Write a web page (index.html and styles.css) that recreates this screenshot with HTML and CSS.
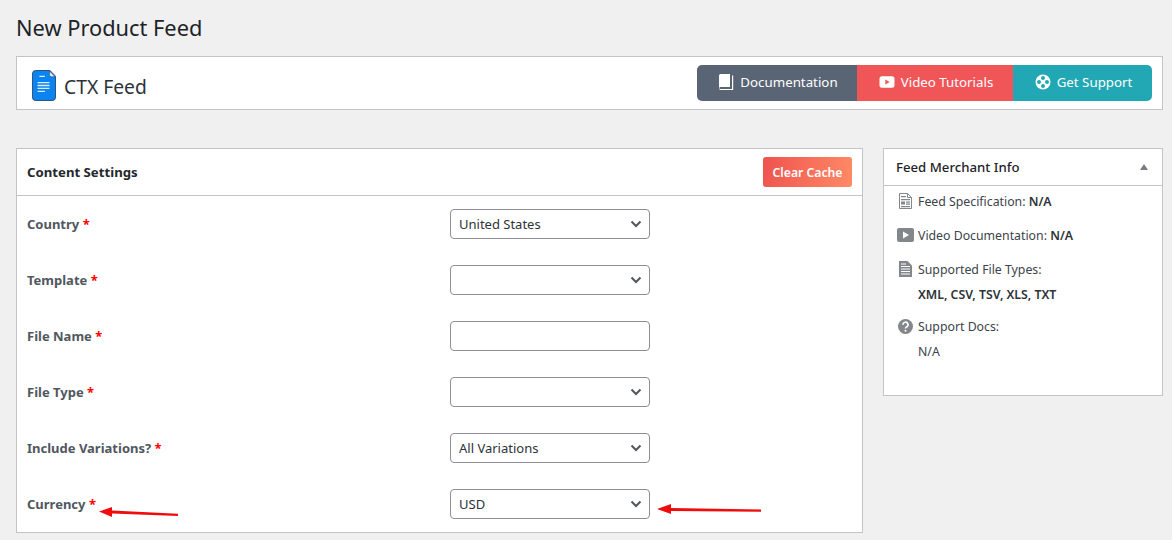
FILE: index.html
```html
<!DOCTYPE html>
<html lang="en">
<head>
<meta charset="utf-8">
<title>New Product Feed</title>
<link rel="stylesheet" href="styles.css">
</head>
<body>
<div class="wrap">
  <h1 class="page-title">New Product Feed</h1>
  <header class="brand-bar">
    <div class="brand">
      <svg class="brand-icon" width="24" height="31" viewBox="0 0 26 32" preserveAspectRatio="none"><path d="M4 .5h15.500l6 6V28a3.500 3.500 0 0 1-3.500 3.500H4A3.500 3.500 0 0 1 .5 28V4A3.500 3.500 0 0 1 4 .5z" fill="#0a84f0" stroke="#2c4a6e"/><path d="M19 1l6 6h-4a2 2 0 0 1-2-2z" fill="#e8eef4" stroke="#2c4a6e" stroke-width=".6"/><path d="M8 6.500h6M6 13h13M6 16h13M6 19h13M6 22h8" stroke="#dcecff" stroke-width="1.300" fill="none"/></svg>
      <span class="brand-name">CTX Feed</span>
    </div>
    <nav class="btn-group">
      <a class="link-btn doc"><svg width="16" height="17" viewBox="0 0 16 17"><path d="M1 1.500A1.500 1.500 0 0 1 2.500 0H12v13H2.500A1.500 1.500 0 0 0 1 14.500z" fill="#fff"/><path d="M14 1.500h1.200V16H3a2 2 0 0 1-2-1.500A1.600 1.600 0 0 1 2.500 15H14z" fill="#fff"/></svg>Documentation</a>
      <a class="link-btn video"><svg width="16" height="12" viewBox="0 0 16 12"><rect width="15" height="11.500" y=".25" x=".5" rx="2.500" fill="#fff"/><path d="M6.300 3.400v5.200l4.400-2.600z" fill="#f05558"/></svg>Video Tutorials</a>
      <a class="link-btn support"><svg width="16" height="16" viewBox="0 0 16 16"><circle cx="8" cy="8" r="7.500" fill="#fff"/><circle cx="8" cy="4" r="2" fill="#22a7b5"/><circle cx="8" cy="12" r="2" fill="#22a7b5"/><circle cx="4" cy="8" r="2" fill="#22a7b5"/><circle cx="12" cy="8" r="2" fill="#22a7b5"/></svg>Get Support</a>
    </nav>
  </header>
  <div class="columns">
    <main class="card settings">
      <div class="card-head">
        <h2 class="card-title">Content Settings</h2>
        <button class="clear-btn" type="button">Clear Cache</button>
      </div>
      <div class="form-row">
        <label class="form-label">Country <span class="req">*</span></label>
        <select class="field"><option>United States</option></select>
      </div>
      <div class="form-row">
        <label class="form-label">Template <span class="req">*</span></label>
        <select class="field"><option></option></select>
      </div>
      <div class="form-row">
        <label class="form-label">File Name <span class="req">*</span></label>
        <input class="field" type="text">
      </div>
      <div class="form-row">
        <label class="form-label">File Type <span class="req">*</span></label>
        <select class="field"><option></option></select>
      </div>
      <div class="form-row">
        <label class="form-label">Include Variations? <span class="req">*</span></label>
        <select class="field"><option>All Variations</option></select>
      </div>
      <div class="form-row">
        <label class="form-label">Currency <span class="req">*</span></label>
        <select class="field"><option>USD</option></select>
      </div>
    </main>
    <aside class="card info">
      <div class="info-head">
        <h2 class="info-title">Feed Merchant Info</h2>
        <span class="caret"></span>
      </div>
      <ul class="info-list">
        <li class="info-item">
          <span class="info-icon"><svg width="13" height="16" viewBox="0 0 13 16"><path d="M.5.500h8l4 4v11H.5z" fill="#fff" stroke="#82878c"/><path d="M8.500.500v4h4" fill="none" stroke="#82878c"/><path d="M2 3h5v1.200H2zM2 6h9v1.200H2zM2 8.500h4v3H2zM7 8.500h4v1.200H7zM7 10.500h4v1.200H7zM2 13h9v1.200H2z" fill="#82878c"/></svg></span>
          <span>Feed Specification: <b class="strong">N/A</b></span>
        </li>
        <li class="info-item">
          <span class="info-icon"><svg width="17" height="14" viewBox="0 0 17 14"><rect width="17" height="14" rx="2" fill="#82878c"/><path d="M6 3.500v7l6-3.500z" fill="#fff"/></svg></span>
          <span>Video Documentation: <b class="strong">N/A</b></span>
        </li>
        <li class="info-item">
          <span class="info-icon"><svg width="13" height="16" viewBox="0 0 13 16"><path d="M0 0h8.500L13 4.500V16H0z" fill="#82878c"/><path d="M2 3h5M2 5.500h9M2 8h9M2 10.500h9M2 13h9" stroke="#fff" stroke-width="1"/></svg></span>
          <span>Supported File Types:</span>
        </li>
        <li class="info-detail strong">XML, CSV, TSV, XLS, TXT</li>
        <li class="info-item">
          <span class="info-icon"><svg width="15" height="15" viewBox="0 0 15 15"><circle cx="7.500" cy="7.500" r="7.500" fill="#82878c"/><path d="M5 5.800a2.500 2.500 0 1 1 3.700 2.100c-.8.500-1.200.8-1.200 1.600" fill="none" stroke="#fff" stroke-width="1.700"/><circle cx="7.500" cy="11.700" r="1" fill="#fff"/></svg></span>
          <span>Support Docs:</span>
        </li>
        <li class="info-detail">N/A</li>
      </ul>
    </aside>
  </div>
</div>
<svg class="annotation arrow-label" width="82" height="12" viewBox="0 0 82 12"><path d="M0 5.500L13 1v3.500l66 3.200v2.300L13 7.500V11z" fill="#f00c0c"/></svg>
<svg class="annotation arrow-field" width="106" height="12" viewBox="0 0 106 12"><path d="M0 6L14 1v4l90 1.500v2.300L14 8v3z" fill="#f00c0c"/></svg>
</body>
</html>
```
FILE: styles.css
```css
* { box-sizing: border-box; }
html, body { margin: 0; height: 540px; overflow: hidden; }
body {
  background: #f0f0f1;
  color: #3c434a;
  font-family: "Noto Sans", "Open Sans", sans-serif;
  font-size: 13px;
  position: relative;
}
.wrap { padding: 0 9px 0 16px; }
.page-title {
  margin: 0;
  height: 56px;
  padding-top: 13px;
  font-size: 21.800px;
  line-height: 30px;
  font-weight: 400;
  color: #1d2327;
}
.brand-bar {
  height: 54px;
  background: #fff;
  border: 1px solid #c3c4c7;
  padding: 8px 10px 8px 15px;
  display: flex;
  justify-content: space-between;
  align-items: center;
}
.brand { display: flex; align-items: center; gap: 8px; margin-top: 4px; }
.brand-icon { display: block; }
.brand-name { font-size: 19.300px; color: #2c3338; line-height: 26px; padding-top: 4px; }
.btn-group { display: flex; height: 36px; border-radius: 5px; overflow: hidden; }
.link-btn {
  display: flex;
  align-items: center;
  justify-content: center;
  gap: 6px;
  color: #fff;
  font-size: 13.300px;
  padding: 0 0 2px 2px;
}
.link-btn.doc { width: 160px; background: #596575; }
.link-btn.video { width: 156px; background: #f05558; }
.link-btn.support { width: 139px; background: #22a7b5; }
.columns { display: flex; align-items: flex-start; gap: 20px; margin-top: 38px; }
.card { background: #fff; border: 1px solid #c3c4c7; }
.settings { width: 847px; height: 385px; }
.card-head {
  height: 47px;
  border-bottom: 1px solid #c3c4c7;
  padding: 0 10px;
  display: flex;
  align-items: center;
  justify-content: space-between;
}
.card-title { margin: 0; font-size: 13.200px; font-weight: 700; color: #23282d; }
.clear-btn {
  width: 89px;
  height: 30px;
  border: 0;
  border-radius: 3px;
  background: linear-gradient(100deg, #ef5350, #ff8a65);
  color: #fff;
  font: 600 12.200px "Noto Sans", "Open Sans", sans-serif;
  padding: 0;
}
.form-row { height: 56px; padding: 13px 10px; display: flex; align-items: center; }
.form-label { width: 423px; font-size: 13px; font-weight: 700; color: #50575e; }
.req { color: #f00; }
.field {
  width: 200px;
  height: 30px;
  border: 1px solid #8c8f94;
  border-radius: 4px;
  background-color: #fff;
  color: #2c3338;
  font: 13px "Noto Sans", "Open Sans", sans-serif;
  padding: 0 8px;
  margin: 0;
}
select.field {
  appearance: none;
  background-image: url("data:image/svg+xml,%3Csvg xmlns='http://www.w3.org/2000/svg' width='12' height='8' viewBox='0 0 12 8'%3E%3Cpath d='M1.500 1.500L6 6l4.500-4.500' fill='none' stroke='%2350575e' stroke-width='2'/%3E%3C/svg%3E");
  background-repeat: no-repeat;
  background-position: right 7px center;
}
.info { width: 280px; height: 248px; }
.info-head {
  height: 37px;
  border-bottom: 1px solid #c3c4c7;
  padding: 0 14px 0 12px;
  display: flex;
  align-items: center;
  justify-content: space-between;
}
.info-title { margin: 0; font-size: 13.200px; font-weight: 500; color: #1d2327; }
.caret {
  width: 0;
  height: 0;
  border-left: 4.500px solid transparent;
  border-right: 4.500px solid transparent;
  border-bottom: 6px solid #787c82;
}
.info-list { list-style: none; margin: 0; padding: 5px 12px 0; }
.info-item { display: flex; align-items: center; height: 20px; margin-bottom: 14px; gap: 4px; font-size: 12.300px; color: #3c434a; }
.info-icon { width: 18px; display: flex; justify-content: center; flex: none; }
.info-icon svg { display: block; }
.info-detail { height: 20px; margin: -8px 0 11px 22px; font-size: 12.300px; line-height: 20px; }
.strong { font-weight: 600; color: #2c3338; }
.annotation { position: absolute; display: block; }
.arrow-label { left: 99px; top: 506px; }
.arrow-field { left: 657px; top: 503px; }
```
